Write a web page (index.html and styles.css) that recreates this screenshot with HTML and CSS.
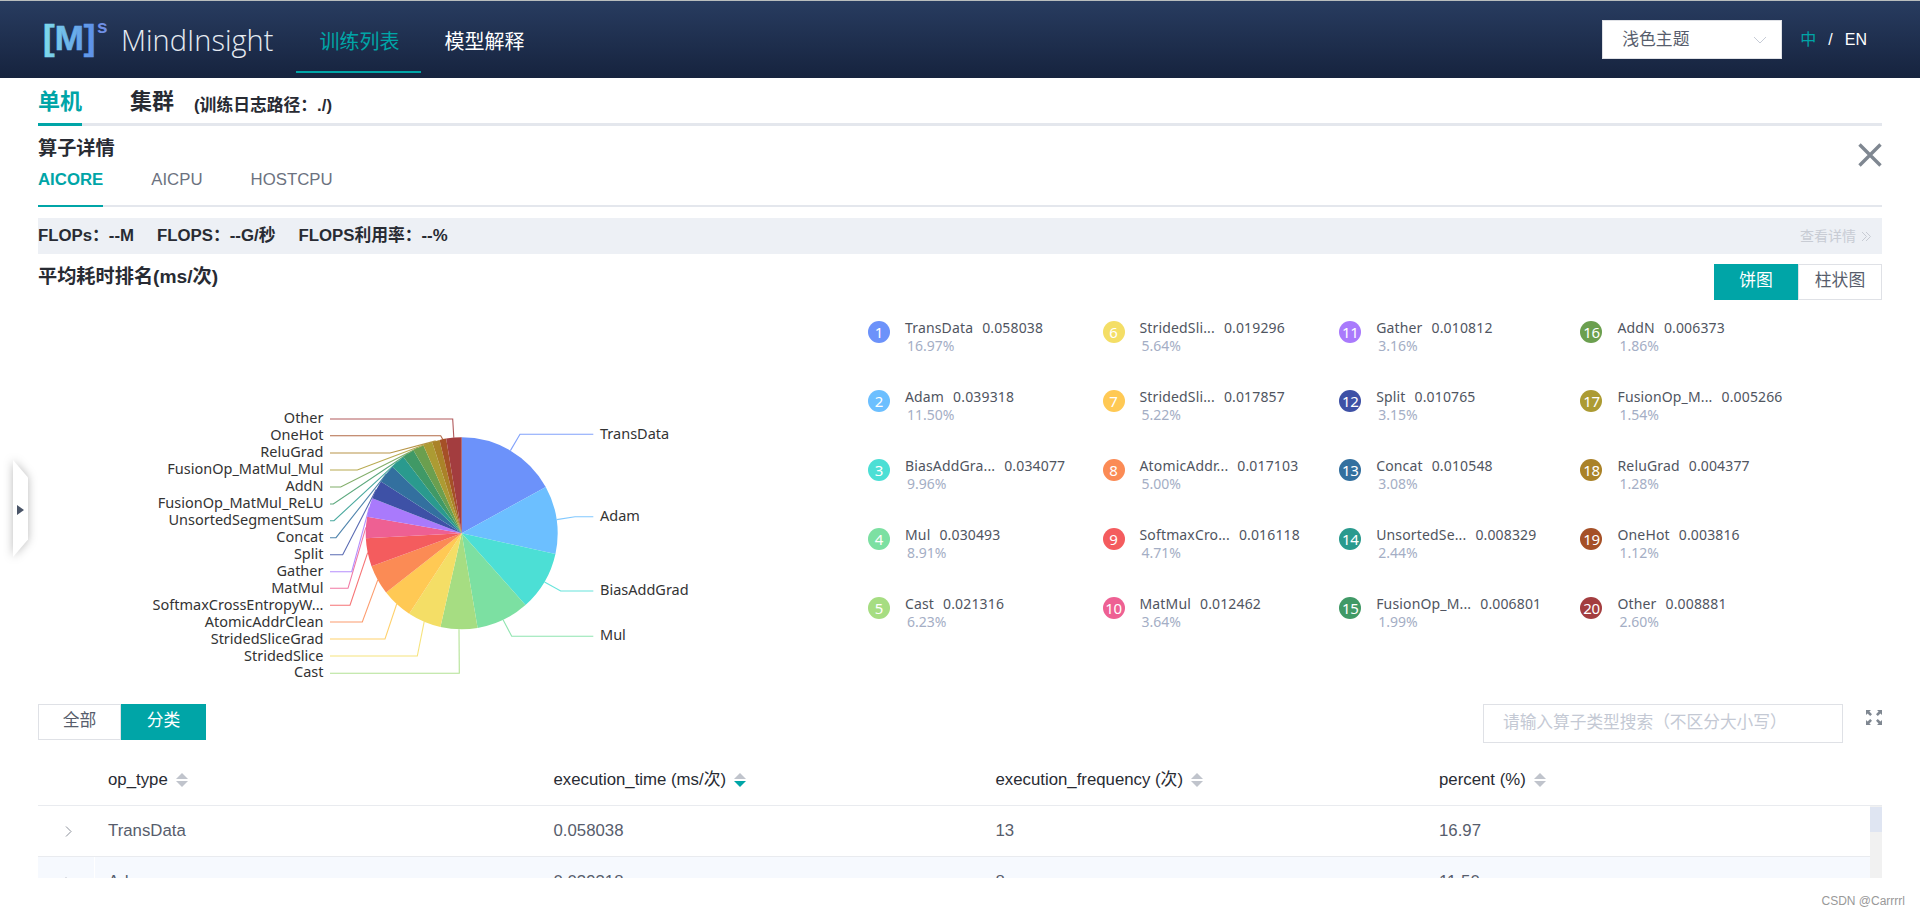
FILE: index.html
```html
<!DOCTYPE html>
<html lang="zh">
<head>
<meta charset="utf-8">
<title>MindInsight</title>
<link rel="stylesheet" href="styles.css">
</head>
<body>
<div class="app">
  <header class="topbar">
    <svg class="logo-mark" width="70" height="60" viewBox="43 9 70 60">
      <defs>
        <linearGradient id="logoGrad" x1="0" y1="0" x2="1" y2="0">
          <stop offset="0" stop-color="#7fdcea"/>
          <stop offset="1" stop-color="#5c8de8"/>
        </linearGradient>
      </defs>
      <text x="43" y="49" class="logo-m" fill="url(#logoGrad)">[M]</text>
      <text x="97" y="32" class="logo-s">s</text>
    </svg>
    <span class="logo-text">MindInsight</span>
    <nav class="nav">
      <a class="nav-item active">训练列表</a>
      <a class="nav-item">模型解释</a>
    </nav>
    <div class="theme-select">
      <span>浅色主题</span>
      <svg width="14" height="8" viewBox="0 0 14 8"><path d="M1 1l6 6 6-6" fill="none" stroke="#c6cbd6" stroke-width="1"/></svg>
    </div>
    <div class="lang"><span class="lang-on">中</span><span>/</span><span>EN</span></div>
  </header>

  <main class="main">
    <div class="cluster-tabs">
      <span class="cluster-tab active">单机</span>
      <span class="cluster-tab">集群</span>
      <span class="log-path">(训练日志路径：./)</span>
    </div>

    <div class="detail-head">
      <h2 class="detail-title">算子详情</h2>
      <svg class="close-x" width="24" height="24" viewBox="0 0 24 24"><path d="M1.5 1.5l21 21M22.5 1.5l-21 21" stroke="#7f8791" stroke-width="3.4" fill="none"/></svg>
    </div>
    <div class="dev-tabs">
      <span class="dev-tab active">AICORE</span>
      <span class="dev-tab">AICPU</span>
      <span class="dev-tab">HOSTCPU</span>
    </div>

    <div class="flops">
      <div class="flops-items"><span>FLOPs：--M</span><span>FLOPS：--G/秒</span><span>FLOPS利用率：--%</span></div>
      <span class="flops-more">查看详情 <svg width="11" height="11" viewBox="0 0 11 11"><path d="M1 1l4.5 4.5L1 10M5 1l4.5 4.5L5 10" fill="none" stroke="#c8ccd4" stroke-width="1"/></svg></span>
    </div>

    <div class="chart-head">
      <h3 class="chart-title">平均耗时排名(ms/次)</h3>
      <div class="seg"><span class="seg-btn on">饼图</span><span class="seg-btn">柱状图</span></div>
    </div>

    <div class="chart-body">
      <svg class="pie" width="830" height="404" viewBox="38 300 830 404">
        <g class="slices" transform="rotate(-90 461.7 533.3)">
          <circle class="slice c1" cx="461.7" cy="533.3" r="48" pathLength="100" stroke-dasharray="16.97 83.03" stroke-dashoffset="0"/>
          <circle class="slice c2" cx="461.7" cy="533.3" r="48" pathLength="100" stroke-dasharray="11.5 88.5" stroke-dashoffset="-16.97"/>
          <circle class="slice c3" cx="461.7" cy="533.3" r="48" pathLength="100" stroke-dasharray="9.96 90.04" stroke-dashoffset="-28.47"/>
          <circle class="slice c4" cx="461.7" cy="533.3" r="48" pathLength="100" stroke-dasharray="8.91 91.09" stroke-dashoffset="-38.43"/>
          <circle class="slice c5" cx="461.7" cy="533.3" r="48" pathLength="100" stroke-dasharray="6.23 93.77" stroke-dashoffset="-47.34"/>
          <circle class="slice c6" cx="461.7" cy="533.3" r="48" pathLength="100" stroke-dasharray="5.64 94.36" stroke-dashoffset="-53.57"/>
          <circle class="slice c7" cx="461.7" cy="533.3" r="48" pathLength="100" stroke-dasharray="5.22 94.78" stroke-dashoffset="-59.21"/>
          <circle class="slice c8" cx="461.7" cy="533.3" r="48" pathLength="100" stroke-dasharray="5 95" stroke-dashoffset="-64.43"/>
          <circle class="slice c9" cx="461.7" cy="533.3" r="48" pathLength="100" stroke-dasharray="4.71 95.29" stroke-dashoffset="-69.43"/>
          <circle class="slice c10" cx="461.7" cy="533.3" r="48" pathLength="100" stroke-dasharray="3.64 96.36" stroke-dashoffset="-74.14"/>
          <circle class="slice c11" cx="461.7" cy="533.3" r="48" pathLength="100" stroke-dasharray="3.16 96.84" stroke-dashoffset="-77.78"/>
          <circle class="slice c12" cx="461.7" cy="533.3" r="48" pathLength="100" stroke-dasharray="3.15 96.85" stroke-dashoffset="-80.94"/>
          <circle class="slice c13" cx="461.7" cy="533.3" r="48" pathLength="100" stroke-dasharray="3.08 96.92" stroke-dashoffset="-84.09"/>
          <circle class="slice c14" cx="461.7" cy="533.3" r="48" pathLength="100" stroke-dasharray="2.44 97.56" stroke-dashoffset="-87.17"/>
          <circle class="slice c15" cx="461.7" cy="533.3" r="48" pathLength="100" stroke-dasharray="1.99 98.01" stroke-dashoffset="-89.61"/>
          <circle class="slice c16" cx="461.7" cy="533.3" r="48" pathLength="100" stroke-dasharray="1.86 98.14" stroke-dashoffset="-91.6"/>
          <circle class="slice c17" cx="461.7" cy="533.3" r="48" pathLength="100" stroke-dasharray="1.54 98.46" stroke-dashoffset="-93.46"/>
          <circle class="slice c18" cx="461.7" cy="533.3" r="48" pathLength="100" stroke-dasharray="1.28 98.72" stroke-dashoffset="-95"/>
          <circle class="slice c19" cx="461.7" cy="533.3" r="48" pathLength="100" stroke-dasharray="1.12 98.88" stroke-dashoffset="-96.28"/>
          <circle class="slice c20" cx="461.7" cy="533.3" r="48" pathLength="100" stroke-dasharray="2.6 97.4" stroke-dashoffset="-97.4"/>
        </g>
        <g class="leaders">
          <polyline class="leader c1" points="510.4,450.6 520,434.3 593.3,434.3"/>
          <polyline class="leader c2" points="556.7,519.6 575,516.7 593.3,516.7"/>
          <polyline class="leader c3" points="544.5,581.9 560.7,591 593.3,591"/>
          <polyline class="leader c4" points="503.2,619.9 511.7,636.3 593.3,636.3"/>
          <polyline class="leader c5" points="459,629.3 459.3,673.3 330,673.3"/>
          <polyline class="leader c6" points="424.2,621.7 417.3,656 330,656"/>
          <polyline class="leader c7" points="396.7,604 385,639 330,639"/>
          <polyline class="leader c8" points="377.8,579.9 362.3,622 330,622"/>
          <polyline class="leader c9" points="367.7,552.6 350,605.3 330,605.3"/>
          <polyline class="leader c10" points="365.9,527.4 348,588.3 330,588.3"/>
          <polyline class="leader c11" points="369.3,507.3 351.7,571.7 330,571.7"/>
          <polyline class="leader c12" points="376.2,489.6 342.7,554.7 330,554.7"/>
          <polyline class="leader c13" points="386.4,473.8 336,537.7 330,537.7"/>
          <polyline class="leader c14" points="397.7,461.7 334,520.7 330,520.7"/>
          <polyline class="leader c15" points="408.3,453.5 333.3,504 330,504"/>
          <polyline class="leader c16" points="418.3,447.7 340.7,487 330,487"/>
          <polyline class="leader c17" points="427.6,443.6 357.3,470 330,470"/>
          <polyline class="leader c18" points="435.7,440.9 390,453 330,453"/>
          <polyline class="leader c19" points="442.7,439.2 440.7,435.7 330,435.7"/>
          <polyline class="leader c20" points="453.8,437.6 452.7,419 330,419"/>
        </g>
        <g class="pie-labels">
          <text x="600" y="438.5">TransData</text>
          <text x="600" y="520.5">Adam</text>
          <text x="600" y="595">BiasAddGrad</text>
          <text x="600" y="640">Mul</text>
        </g>
        <g class="pie-labels end">
          <text x="323.5" y="422.5">Other</text>
          <text x="323.5" y="439.5">OneHot</text>
          <text x="323.5" y="456.5">ReluGrad</text>
          <text x="323.5" y="473.5">FusionOp_MatMul_Mul</text>
          <text x="323.5" y="490.5">AddN</text>
          <text x="323.5" y="507.5">FusionOp_MatMul_ReLU</text>
          <text x="323.5" y="524.5">UnsortedSegmentSum</text>
          <text x="323.5" y="541.5">Concat</text>
          <text x="323.5" y="558.5">Split</text>
          <text x="323.5" y="575.5">Gather</text>
          <text x="323.5" y="592.5">MatMul</text>
          <text x="323.5" y="609.5">SoftmaxCrossEntropyW...</text>
          <text x="323.5" y="626.5">AtomicAddrClean</text>
          <text x="323.5" y="643.5">StridedSliceGrad</text>
          <text x="323.5" y="660.5">StridedSlice</text>
          <text x="323.5" y="677">Cast</text>
        </g>
      </svg>

      <div class="legend">
        <div class="lg c1"><i class="badge">1</i><div><p class="lg-name"><span>TransData</span><span>0.058038</span></p><p class="lg-pct">16.97%</p></div></div>
        <div class="lg c2"><i class="badge">2</i><div><p class="lg-name"><span>Adam</span><span>0.039318</span></p><p class="lg-pct">11.50%</p></div></div>
        <div class="lg c3"><i class="badge">3</i><div><p class="lg-name"><span>BiasAddGra...</span><span>0.034077</span></p><p class="lg-pct">9.96%</p></div></div>
        <div class="lg c4"><i class="badge">4</i><div><p class="lg-name"><span>Mul</span><span>0.030493</span></p><p class="lg-pct">8.91%</p></div></div>
        <div class="lg c5"><i class="badge">5</i><div><p class="lg-name"><span>Cast</span><span>0.021316</span></p><p class="lg-pct">6.23%</p></div></div>
        <div class="lg c6"><i class="badge">6</i><div><p class="lg-name"><span>StridedSli...</span><span>0.019296</span></p><p class="lg-pct">5.64%</p></div></div>
        <div class="lg c7"><i class="badge">7</i><div><p class="lg-name"><span>StridedSli...</span><span>0.017857</span></p><p class="lg-pct">5.22%</p></div></div>
        <div class="lg c8"><i class="badge">8</i><div><p class="lg-name"><span>AtomicAddr...</span><span>0.017103</span></p><p class="lg-pct">5.00%</p></div></div>
        <div class="lg c9"><i class="badge">9</i><div><p class="lg-name"><span>SoftmaxCro...</span><span>0.016118</span></p><p class="lg-pct">4.71%</p></div></div>
        <div class="lg c10"><i class="badge">10</i><div><p class="lg-name"><span>MatMul</span><span>0.012462</span></p><p class="lg-pct">3.64%</p></div></div>
        <div class="lg c11"><i class="badge">11</i><div><p class="lg-name"><span>Gather</span><span>0.010812</span></p><p class="lg-pct">3.16%</p></div></div>
        <div class="lg c12"><i class="badge">12</i><div><p class="lg-name"><span>Split</span><span>0.010765</span></p><p class="lg-pct">3.15%</p></div></div>
        <div class="lg c13"><i class="badge">13</i><div><p class="lg-name"><span>Concat</span><span>0.010548</span></p><p class="lg-pct">3.08%</p></div></div>
        <div class="lg c14"><i class="badge">14</i><div><p class="lg-name"><span>UnsortedSe...</span><span>0.008329</span></p><p class="lg-pct">2.44%</p></div></div>
        <div class="lg c15"><i class="badge">15</i><div><p class="lg-name"><span>FusionOp_M...</span><span>0.006801</span></p><p class="lg-pct">1.99%</p></div></div>
        <div class="lg c16"><i class="badge">16</i><div><p class="lg-name"><span>AddN</span><span>0.006373</span></p><p class="lg-pct">1.86%</p></div></div>
        <div class="lg c17"><i class="badge">17</i><div><p class="lg-name"><span>FusionOp_M...</span><span>0.005266</span></p><p class="lg-pct">1.54%</p></div></div>
        <div class="lg c18"><i class="badge">18</i><div><p class="lg-name"><span>ReluGrad</span><span>0.004377</span></p><p class="lg-pct">1.28%</p></div></div>
        <div class="lg c19"><i class="badge">19</i><div><p class="lg-name"><span>OneHot</span><span>0.003816</span></p><p class="lg-pct">1.12%</p></div></div>
        <div class="lg c20"><i class="badge">20</i><div><p class="lg-name"><span>Other</span><span>0.008881</span></p><p class="lg-pct">2.60%</p></div></div>
      </div>
    </div>

    <div class="table-tools">
      <div class="seg small"><span class="seg-btn">全部</span><span class="seg-btn on">分类</span></div>
      <div class="search-wrap">
        <div class="search">请输入算子类型搜索（不区分大小写）</div>
        <svg class="expand" width="16" height="15" viewBox="0 0 16 15"><path d="M0 0h5L3.4 1.6 6 4.2 4.2 6 1.6 3.4 0 5zM16 0v5l-1.6-1.6L11.8 6 10 4.2l2.6-2.6L11 0zM0 15v-5l1.6 1.6L4.2 9 6 10.8l-2.6 2.6L5 15zM16 15h-5l1.6-1.6L10 10.8 11.8 9l2.6 2.6L16 10z" fill="#7f8791"/></svg>
      </div>
    </div>

    <div class="thead trow">
      <span></span>
      <span class="th">op_type<i class="sort"></i></span>
      <span class="th">execution_time (ms/次)<i class="sort desc"></i></span>
      <span class="th">execution_frequency (次)<i class="sort"></i></span>
      <span class="th">percent (%)<i class="sort"></i></span>
    </div>
    <div class="tbody-wrap">
      <div class="tbody">
        <div class="trow">
          <span class="exp"><svg width="7" height="11" viewBox="0 0 7 11"><path d="M1 .5l5 5-5 5" fill="none" stroke="#8a8f99" stroke-width="1"/></svg></span>
          <span>TransData</span><span>0.058038</span><span>13</span><span>16.97</span>
        </div>
        <div class="trow alt">
          <span class="exp"><svg width="7" height="11" viewBox="0 0 7 11"><path d="M1 .5l5 5-5 5" fill="none" stroke="#8a8f99" stroke-width="1"/></svg></span>
          <span>Adam</span><span>0.039318</span><span>8</span><span>11.50</span>
        </div>
      </div>
      <div class="scroll"><div class="thumb"></div></div>
    </div>

    <div class="watermark">CSDN @Carrrrl</div>
  </main>

  <div class="side-toggle"><div class="side-shape"><i class="side-arrow"></i></div></div>
</div>
</body>
</html>
```
FILE: styles.css
```css
* { box-sizing: border-box; }
html, body { margin: 0; padding: 0; }
body {
  font-family: "Liberation Sans", "Noto Sans CJK SC", sans-serif;
  color: #282b33;
  background: #fff;
}
p, h2, h3 { margin: 0; }
i { font-style: normal; }

.app { position: relative; width: 1920px; height: 914px; overflow: hidden; }

/* top bar */
.topbar {
  display: flex;
  align-items: center;
  height: 78px;
  padding: 0 53px 0 43px;
  border-top: 1px solid #b9bdbd;
  background: linear-gradient(#283c60, #16233e);
  color: #fff;
}
.logo-mark { display: block; flex: none; }
.logo-m { font: bold 35px "Liberation Sans", sans-serif; stroke: url(#logoGrad); stroke-width: .6; }
.logo-s { font: bold 19px "Liberation Sans", sans-serif; fill: #6f8fe6; }
.logo-text {
  flex: none;
  width: 152px;
  margin-left: 8px;
  font: 300 29px "Open Sans", sans-serif;
  line-height: 40px;
  color: #e6ebf2;
  white-space: nowrap;
}
.nav { display: flex; align-self: flex-start; margin-left: 23px; }
.nav-item {
  height: 72px;
  padding: 12px 21.5px 0 23.5px;
  border-bottom: 2px solid transparent;
  font-size: 20px;
  line-height: 58px;
  color: #fff;
}
.nav-item.active { color: #00a5a7; border-bottom-color: #00a5a7; }
.theme-select {
  display: flex;
  align-items: center;
  justify-content: space-between;
  width: 180px;
  height: 39px;
  margin-left: auto;
  padding: 0 14px 0 19px;
  background: #fff;
  border: 1px solid #dfe1e6;
  font-size: 16.8px;
  line-height: 20px;
  color: #575d6c;
}
.lang { display: flex; gap: 12px; margin-left: 18px; font-size: 16px; line-height: 20px; }
.lang-on { color: #00a5a7; }

/* main */
.main { padding: 0 38px; }
.cluster-tabs {
  display: flex;
  align-items: center;
  height: 48px;
  border-bottom: 3px solid #e4e7ed;
}
.cluster-tab {
  height: 48px;
  margin-bottom: -3px;
  margin-right: 48px;
  font-size: 22px;
  line-height: 48px;
  font-weight: 700;
  border-bottom: 3px solid transparent;
}
.cluster-tab.active { color: #00a5a7; border-bottom-color: #00a5a7; }
.log-path { margin-left: -28px; padding-top: 10px; font-size: 16.8px; line-height: 20px; font-weight: 700; }

.detail-head { display: flex; justify-content: space-between; height: 41px; padding-top: 11px; }
.detail-title { font-size: 19.2px; line-height: 24px; font-weight: 700; }
.close-x { display: block; margin-top: 6px; }
.dev-tabs { display: flex; gap: 48px; height: 40px; border-bottom: 2px solid #e4e7ed; }
.dev-tab {
  height: 40px;
  padding-top: 2px;
  font-size: 16.8px;
  line-height: 22px;
  color: #6c7280;
  border-bottom: 2px solid transparent;
}
.dev-tab.active { color: #00a5a7; font-weight: 700; border-bottom-color: #00a5a7; }

.flops {
  display: flex;
  align-items: center;
  justify-content: space-between;
  height: 36px;
  margin-top: 11px;
  padding-right: 10px;
  background: #edf0f5;
}
.flops-items { display: flex; gap: 23px; font-size: 16.8px; line-height: 20px; font-weight: 700; }
.flops-more { display: flex; align-items: center; gap: 5px; font-size: 14px; line-height: 18px; color: #c8ccd4; }

.chart-head {
  display: flex;
  justify-content: space-between;
  align-items: flex-start;
  height: 46px;
  padding-top: 10px;
}
.chart-title { font-size: 19.2px; line-height: 26px; font-weight: 700; }
.seg { display: flex; }
.seg-btn {
  display: block;
  width: 84px;
  height: 36px;
  border: 1px solid #dfe1e6;
  font-size: 16.8px;
  line-height: 32px;
  text-align: center;
  color: #575d6c;
}
.seg-btn.on { background: #00a5a7; border-color: #00a5a7; color: #fff; }

/* chart */
.chart-body { display: flex; height: 404px; }
.pie { display: block; flex: none; }
.slice { fill: none; stroke-width: 96; stroke: var(--c); }
.leader { fill: none; stroke: var(--c); stroke-width: 1.1; opacity: .85; }
.pie-labels text { font: 14.5px "Noto Sans", sans-serif; fill: #333; }
.pie-labels.end text { text-anchor: end; }

.legend {
  display: grid;
  grid-auto-flow: column;
  grid-template-rows: repeat(5, 69px);
  grid-template-columns: 234.5px 236.7px 241.3px 1fr;
  align-self: flex-start;
  margin-top: 19px;
  font-family: "Noto Sans", "Noto Sans CJK SC", sans-serif;
}
.lg { display: flex; align-items: flex-start; }
.badge {
  flex: none;
  width: 22px;
  height: 22px;
  margin: 2px 15px 0 0;
  border-radius: 50%;
  background: var(--c);
  color: #fff;
  font-size: 15px;
  line-height: 22px;
  letter-spacing: -.3px;
  text-align: center;
}
.lg-name { display: flex; gap: 9px; font-size: 14px; line-height: 18px; color: #50555f; white-space: nowrap; letter-spacing: .15px; }
.lg-pct { padding-left: 2px; font-size: 14px; line-height: 18px; color: #a4aec5; }

.c1 { --c: #6c92fa; } .c2 { --c: #6cbfff; } .c3 { --c: #4cdfd5; } .c4 { --c: #7ce0a2; }
.c5 { --c: #a6dd82; } .c6 { --c: #f4de66; } .c7 { --c: #ffc954; } .c8 { --c: #fb8b55; }
.c9 { --c: #f45c5e; } .c10 { --c: #ee6093; } .c11 { --c: #a97afc; } .c12 { --c: #3e51a6; }
.c13 { --c: #33709f; } .c14 { --c: #2a9a8e; } .c15 { --c: #409966; } .c16 { --c: #6b9f4f; }
.c17 { --c: #ac9b33; } .c18 { --c: #aa8228; } .c19 { --c: #a55027; } .c20 { --c: #a33d3f; }

/* table */
.table-tools { display: flex; justify-content: space-between; align-items: flex-start; height: 39px; }
.seg.small .seg-btn { width: 83px; }
.seg.small .seg-btn.on { width: 85px; }
.search-wrap { display: flex; align-items: flex-start; gap: 23px; }
.search {
  width: 360px;
  height: 39px;
  padding-left: 19px;
  border: 1px solid #dfe1e6;
  font-size: 16.7px;
  line-height: 35px;
  color: #c4c9d4;
}
.expand { display: block; margin: 6px 0 0 0; }

.trow {
  display: grid;
  grid-template-columns: 70px 445.5px 442px 443.5px 1fr;
  align-items: center;
  font-size: 16.8px;
  line-height: 20px;
  color: #575d6c;
}
.thead { height: 63px; padding-top: 11px; border-bottom: 1px solid #e9ebef; color: #282b33; }
.th { display: flex; align-items: center; gap: 8px; }
.sort { display: inline-flex; flex-direction: column; gap: 2px; }
.sort::before, .sort::after { content: ""; width: 0; height: 0; border: 6px solid transparent; }
.sort::before { border-top-width: 0; border-bottom: 6px solid #c0c4cc; }
.sort::after { border-bottom-width: 0; border-top: 6px solid #c0c4cc; }
.sort.desc::after { border-top-color: #00a5a7; }

.tbody-wrap { display: flex; height: 72px; overflow: hidden; }
.tbody { flex: 1; min-width: 0; }
.tbody .trow { height: 51px; padding-bottom: 1px; border-bottom: 1px solid #e9ebef; }
.tbody .trow.alt { background: #f6f9fe; }
.exp { display: flex; width: 57px; height: 100%; padding: 2px 0 0 27px; align-items: center; border-right: 1px solid #fff; }
.scroll { flex: none; width: 12px; background: #f1f1f1; }
.thumb { height: 25px; margin-top: 1px; background: #dfe5f2; }

.watermark {
  margin: 14px -23px 0 0;
  font-size: 12px;
  line-height: 18px;
  text-align: right;
  color: #999;
}

/* side toggle */
.side-toggle {
  position: absolute;
  left: 13px;
  top: 460px;
  width: 15px;
  height: 97px;
  filter: drop-shadow(0 0 5px rgba(0, 0, 0, .28));
}
.side-shape {
  position: relative;
  width: 100%;
  height: 100%;
  background: #fff;
  clip-path: polygon(0 0, 100% 18%, 100% 82%, 0 100%);
}
.side-arrow {
  position: absolute;
  left: 4px;
  top: 45px;
  width: 0;
  height: 0;
  border-left: 7px solid #4a5568;
  border-top: 5px solid transparent;
  border-bottom: 5px solid transparent;
}
```
